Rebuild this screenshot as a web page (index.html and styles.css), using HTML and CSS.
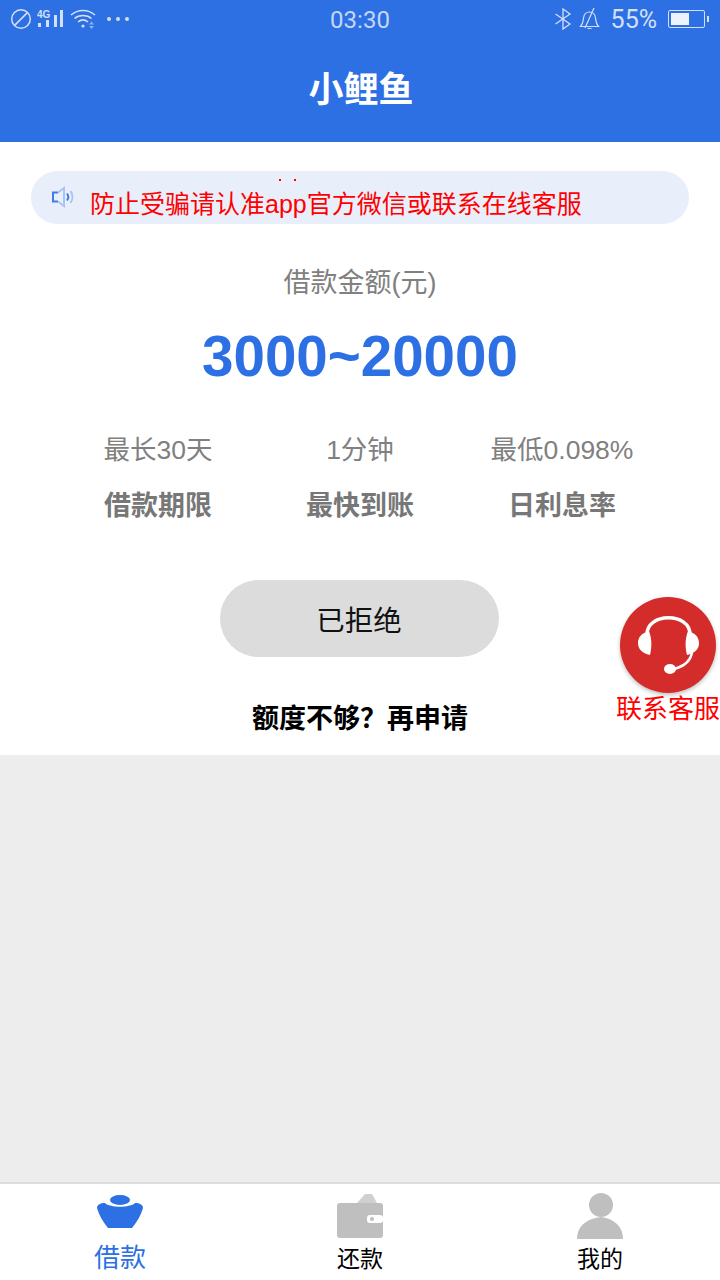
FILE: index.html
```html
<!DOCTYPE html>
<html lang="zh">
<head>
  <meta charset="utf-8">
  <title>小鲤鱼</title>
  <link rel="stylesheet" href="styles.css">
</head>
<body>
  <div class="page">
    <header class="header">
      <div class="status">
        <div class="status-left">
          <svg class="ico-dnd" width="22" height="22" viewBox="0 0 22 22"><circle cx="11" cy="11" r="9.3" fill="none" stroke="#d3e0f8" stroke-width="1.5"/><path d="M4.6 17.4L17.4 4.6" stroke="#d3e0f8" stroke-width="1.5"/></svg>
          <svg class="ico-signal" width="27" height="20" viewBox="0 0 27 20"><text x="0" y="9" class="net-text">4G</text><rect x="1" y="14" width="3" height="4" fill="#d3e0f8"/><rect x="9" y="11" width="3" height="7" fill="#d3e0f8"/><rect x="17" y="6" width="3" height="12" fill="#d3e0f8"/><rect x="23" y="1" width="3" height="17" fill="#d3e0f8"/></svg>
          <svg class="ico-wifi" width="27" height="22" viewBox="0 0 27 22"><path d="M1 7C8 1 18 1 25 7M4.500 10.500C9 6.500 17 6.500 21.500 10.500M8 14C11 11.500 15 11.500 18 14" fill="none" stroke="#d3e0f8" stroke-width="1.600"/><circle cx="13" cy="18" r="1.600" fill="#d3e0f8"/><path d="M19 16.500l2.500-3 2.500 3zM19 18h5l-2.500 3z" fill="#8fb2ee"/></svg>
          <div class="dots"><i></i><i></i><i></i></div>
        </div>
        <div class="clock">03:30</div>
        <div class="status-right">
          <svg width="18" height="22" viewBox="0 0 18 22"><path d="M1.500 6L16 16L9 21V1L16 6L1.500 16" fill="none" stroke="#d3e0f8" stroke-width="1.300"/></svg>
          <svg class="ico-bell" width="21" height="24" viewBox="0 0 21 24"><path d="M1.500 19.500C4 17 4 14.500 4.500 11C5 7 7 5 10.500 5C14 5 16 7 16.500 11C17 14.500 17 17 19.500 19.500ZM8.500 21.500H12.500M6 21L15 1" fill="none" stroke="#d3e0f8" stroke-width="1.200"/></svg>
          <span class="pct">55%</span>
          <div class="battery"><div class="battery-fill"></div></div>
          <div class="battery-tip"></div>
        </div>
      </div>
      <h1 class="title">小鲤鱼</h1>
    </header>

    <main class="main">
      <div class="notice">
        <svg class="ico-sound" width="24" height="24" viewBox="0 0 24 24"><path d="M7 7.500H2V16.500H7" fill="none" stroke="#3f7ce8" stroke-width="2"/><path d="M7 7.500L13 3V21L7 16.500" fill="none" stroke="#a9c4f2" stroke-width="2"/><path d="M16 8.500C17.500 10.500 17.500 13.500 16 15.500" fill="none" stroke="#3f7ce8" stroke-width="2"/><path d="M19.500 6C22 9.500 22 14.500 19.500 18" fill="none" stroke="#a9c4f2" stroke-width="2"/></svg>
        <span class="notice-text">防止受骗请认准app官方微信或联系在线客服</span>
        <span class="clip-dot dot-a"></span>
        <span class="clip-dot dot-b"></span>
      </div>

      <div class="amount-label">借款金额(元)</div>
      <div class="amount">3000~20000</div>

      <div class="stats">
        <div class="stat">
          <div class="stat-value">最长30天</div>
          <div class="stat-name">借款期限</div>
        </div>
        <div class="stat">
          <div class="stat-value">1分钟</div>
          <div class="stat-name">最快到账</div>
        </div>
        <div class="stat">
          <div class="stat-value">最低0.098%</div>
          <div class="stat-name">日利息率</div>
        </div>
      </div>

      <button class="btn-status">已拒绝</button>
      <div class="reapply">额度不够？再申请</div>

      <div class="service">
        <div class="service-circle">
          <svg width="96" height="96" viewBox="0 0 96 96"><path d="M27 38C26 15 71 15 70 38" fill="none" stroke="#fff" stroke-width="3.500"/><path d="M29 34C22 36 18 40 18 46C18 52 22 56 30 58C32 50 32 42 29 34ZM68 34C75 36 79 40 79 46C79 52 75 56 67 58C65 50 65 42 68 34Z" fill="#fff"/><path d="M72 55C71 63 65 69 54 72" fill="none" stroke="#fff" stroke-width="2.500"/><ellipse cx="50" cy="72" rx="6" ry="5" fill="#fff"/></svg>
        </div>
        <div class="service-text">联系客服</div>
      </div>
    </main>

    <div class="spacer"></div>

    <nav class="tabbar">
      <div class="tab tab-active">
        <svg class="tab-ico" width="46" height="34" viewBox="0 0 46 34"><ellipse cx="23" cy="5" rx="10" ry="5" fill="#2c70e3"/><path d="M0 13C0 10 3 8 8 8C13 13 33 13 38 8C43 8 46 10 46 13C44 20 40 27 35 33H11C6 27 2 20 0 13Z" fill="#2c70e3"/></svg>
        <span>借款</span>
      </div>
      <div class="tab tab-wallet">
        <svg class="tab-ico" width="46" height="44" viewBox="0 0 46 44"><path d="M20 9L28 0H35L40 9Z" fill="#d0d0d0"/><rect y="9" width="46" height="35" rx="3" fill="#bfbfbf"/><rect x="30" y="21" width="16" height="8" rx="3" fill="#fff"/><circle cx="35" cy="25" r="2" fill="#bfbfbf"/></svg>
        <span>还款</span>
      </div>
      <div class="tab">
        <svg class="tab-ico" width="46" height="46" viewBox="0 0 46 46"><circle cx="24" cy="12" r="12" fill="#bfbfbf"/><path d="M0 46C0 34 8 26 24 24C38 26 46 34 46 46Z" fill="#bfbfbf"/></svg>
        <span>我的</span>
      </div>
    </nav>
  </div>
</body>
</html>
```

FILE: styles.css
```css
* {
  box-sizing: border-box;
}
body {
  margin: 0;
  font-family: "Liberation Sans", "Noto Sans CJK SC", sans-serif;
  background-color: #ededed;
}
.page {
  display: flex;
  flex-direction: column;
  height: 1280px;
  overflow: hidden;
}

/* header */
.header {
  height: 142px;
  background-color: #2c70e3;
  color: white;
}
.status {
  display: flex;
  justify-content: space-between;
  align-items: center;
  height: 38px;
  padding: 0 11px 0 10px;
  position: relative;
}
.status-left {
  display: flex;
  align-items: center;
  gap: 5px;
}
.net-text {
  font-size: 10px;
  font-weight: 700;
  fill: #d3e0f8;
}
.ico-wifi {
  margin-left: 1px;
}
.dots {
  display: flex;
  gap: 5px;
  margin-left: 5px;
}
.dots i {
  width: 4px;
  height: 4px;
  border-radius: 50%;
  background-color: #d3e0f8;
}
.clock {
  position: absolute;
  left: 0;
  right: 0;
  top: 5px;
  text-align: center;
  font-family: "Roboto", sans-serif;
  font-size: 24px;
  line-height: 30px;
  color: #c5d7f6;
}
.status-right {
  display: flex;
  align-items: center;
  gap: 8px;
  color: #d3e0f8;
}
.ico-bell {
  margin-left: -1px;
  margin-right: 2px;
}
.pct {
  font-family: "Roboto", sans-serif;
  font-size: 25px;
  margin-left: 1px;
  margin-right: 3px;
}
.battery {
  width: 37px;
  height: 18px;
  border: 1px solid #d3e0f8;
  border-radius: 2px;
  padding: 2px;
}
.battery-fill {
  width: 18px;
  height: 100%;
  background-color: #edf2fc;
}
.battery-tip {
  width: 2px;
  height: 6px;
  margin-left: -6px;
  background-color: #d3e0f8;
}
.title {
  margin: 20px 0 0;
  padding-left: 2px;
  text-align: center;
  font-size: 35px;
  line-height: 64px;
  font-weight: 700;
}

/* main card */
.main {
  position: relative;
  height: 613px;
  background-color: white;
  padding: 29px 31px 0;
  display: flex;
  flex-direction: column;
  align-items: center;
}
.notice {
  position: relative;
  width: 658px;
  height: 53px;
  flex-shrink: 0;
  border-radius: 27px;
  background-color: #e8effb;
  display: flex;
  align-items: center;
  padding-left: 20px;
}
.ico-sound {
  margin-top: -2px;
  margin-right: 15px;
}
.notice-text {
  position: relative;
  top: 4px;
  font-size: 25px;
  color: #ff0000;
  white-space: nowrap;
}
.clip-dot {
  position: absolute;
  top: 8px;
  width: 2px;
  height: 2px;
  background-color: #ff0000;
}
.dot-a {
  left: 248px;
}
.dot-b {
  left: 263px;
}
.amount-label {
  margin-top: 39px;
  font-size: 27px;
  line-height: 40px;
  color: #808080;
}
.amount {
  margin-top: 19px;
  font-size: 56.5px;
  line-height: 70px;
  font-weight: 700;
  color: #2c70e3;
}
.stats {
  display: grid;
  grid-template-columns: 202px 202px 202px;
  margin-top: 38px;
  text-align: center;
}
.stat-value {
  font-size: 26.5px;
  line-height: 40px;
  color: #808080;
}
.stat-name {
  margin-top: 16px;
  font-size: 27px;
  line-height: 40px;
  font-weight: 700;
  color: #777;
}
.btn-status {
  margin-top: 54px;
  margin-right: 2px;
  width: 279px;
  height: 77px;
  flex-shrink: 0;
  border: none;
  border-radius: 39px;
  background-color: #dcdcdc;
  color: #111;
  font-family: inherit;
  font-size: 28.5px;
}
.reapply {
  margin-top: 42px;
  font-size: 27px;
  line-height: 40px;
  font-weight: 700;
  color: #000;
}
.service {
  position: absolute;
  left: 616px;
  top: 455px;
  width: 104px;
  text-align: center;
}
.service-circle {
  width: 96px;
  height: 96px;
  margin: 0 0 0 4px;
  border-radius: 50%;
  background-color: #d42b2b;
  box-shadow: 0 2px 4px rgba(0, 0, 0, .25);
}
.service-circle svg {
  display: block;
}
.service-text {
  font-size: 26px;
  line-height: 32px;
  color: #ff0000;
  white-space: nowrap;
}

.spacer {
  flex-grow: 1;
}

/* bottom tabs */
.tabbar {
  height: 98px;
  background-color: white;
  border-top: 2px solid #dcdcdc;
  display: grid;
  grid-template-columns: repeat(3, 240px);
}
.tab {
  display: flex;
  flex-direction: column;
  align-items: center;
  padding-top: 9px;
  font-size: 23px;
  line-height: 30px;
  color: #000;
}
.tab-ico {
  display: block;
  margin-bottom: 5px;
}
.tab-wallet {
  padding-top: 10px;
}
.tab-wallet .tab-ico {
  margin-bottom: 6px;
}
.tab-active {
  padding-top: 11px;
  font-size: 26px;
  color: #2c70e3;
}
.tab-active .tab-ico {
  margin-bottom: 14px;
}
```
